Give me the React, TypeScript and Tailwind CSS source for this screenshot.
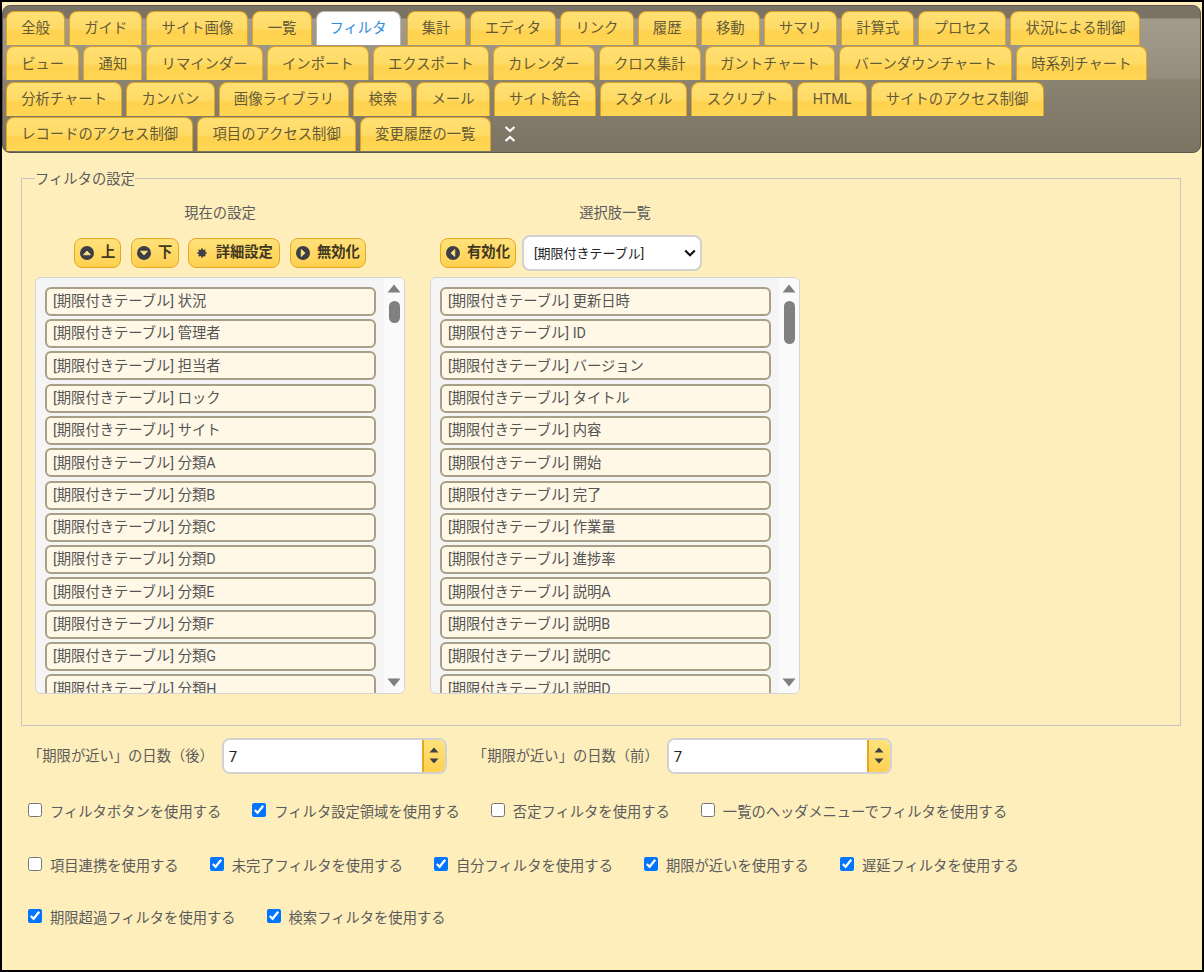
const tabs = [
  "全般", "ガイド", "サイト画像", "一覧", "フィルタ", "集計", "エディタ", "リンク", "履歴", "移動", "サマリ", "計算式", "プロセス", "状況による制御",
  "ビュー", "通知", "リマインダー", "インポート", "エクスポート", "カレンダー", "クロス集計", "ガントチャート", "バーンダウンチャート", "時系列チャート",
  "分析チャート", "カンバン", "画像ライブラリ", "検索", "メール", "サイト統合", "スタイル", "スクリプト", "HTML", "サイトのアクセス制御",
  "レコードのアクセス制御", "項目のアクセス制御", "変更履歴の一覧",
];

const current = ["状況", "管理者", "担当者", "ロック", "サイト", "分類A", "分類B", "分類C", "分類D", "分類E", "分類F", "分類G", "分類H"];
const options = ["更新日時", "ID", "バージョン", "タイトル", "内容", "開始", "完了", "作業量", "進捗率", "説明A", "説明B", "説明C", "説明D"];

const checkRows = [
  {
    gap: "mt-0",
    items: [
      { label: "フィルタボタンを使用する", on: false },
      { label: "フィルタ設定領域を使用する", on: true },
      { label: "否定フィルタを使用する", on: false },
      { label: "一覧のヘッダメニューでフィルタを使用する", on: false },
    ],
  },
  {
    gap: "mt-[34px]",
    items: [
      { label: "項目連携を使用する", on: false },
      { label: "未完了フィルタを使用する", on: true },
      { label: "自分フィルタを使用する", on: true },
      { label: "期限が近いを使用する", on: true },
      { label: "遅延フィルタを使用する", on: true },
    ],
  },
  {
    gap: "mt-[32px]",
    items: [
      { label: "期限超過フィルタを使用する", on: true },
      { label: "検索フィルタを使用する", on: true },
    ],
  },
];

function CircleIcon({ dir }: { dir: "up" | "down" | "left" | "right" }) {
  const shapes = {
    up: "M3.5 8.8 L7 5 L10.5 8.8 Z",
    down: "M3.5 5.2 L7 9 L10.5 5.2 Z",
    left: "M8.8 3.5 L5 7 L8.8 10.5 Z",
    right: "M5.2 3.5 L9 7 L5.2 10.5 Z",
  };
  return (
    <svg width="14" height="14" viewBox="0 0 14 14" className="mr-[7px] shrink-0">
      <circle cx="7" cy="7" r="7" fill="#3d3f45" />
      <path d={shapes[dir]} fill="#ffe585" stroke="#ffe585" strokeWidth="0.8" strokeLinejoin="round" />
    </svg>
  );
}

function GearIcon() {
  return (
    <svg width="12" height="12" viewBox="0 0 14 14" className="mr-[8px] shrink-0">
      <circle cx="7" cy="7" r="3" fill="none" stroke="#3d3f45" strokeWidth="2.4" />
      <path d="M7 1.5V12.5M1.5 7H12.5M3.1 3.1L10.9 10.9M10.9 3.1L3.1 10.9" stroke="#3d3f45" strokeWidth="1.6" />
    </svg>
  );
}

function Button({ icon, width, children }: { icon: React.ReactNode; width: string; children: React.ReactNode }) {
  return (
    <button
      className={`flex h-[30px] items-center justify-center rounded-lg border border-[#e6a823] bg-gradient-to-b from-[#ffe27a] to-[#ffd04f] text-[14.3px] font-bold text-[#3f3720] ${width}`}
    >
      {icon}
      {children}
    </button>
  );
}

function Scrollbar({ thumb }: { thumb: string }) {
  return (
    <div className="flex w-[20px] shrink-0 flex-col items-center bg-[#fafafa] pt-[6px]">
      <svg width="14" height="9" viewBox="0 0 14 9">
        <path d="M7 0.5L13.5 8.5H0.5Z" fill="#808080" />
      </svg>
      <div className={`mt-[8px] w-[11px] rounded-full bg-[#808080] ${thumb}`} />
      <svg width="14" height="9" viewBox="0 0 14 9" className="mb-[6px] mt-auto">
        <path d="M7 8.5L13.5 0.5H0.5Z" fill="#808080" />
      </svg>
    </div>
  );
}

function ItemList({ items, thumb }: { items: string[]; thumb: string }) {
  return (
    <div className="flex h-[417px] w-[370px] overflow-hidden rounded-md border border-[#d4d4d4] bg-[#f5f5f5]">
      <div className="flex min-w-0 flex-1 flex-col gap-[3.3px] overflow-hidden pl-[9px] pr-[8px] pt-[9px]">
        {items.map((item) => (
          <div
            key={item}
            className="flex h-[29px] shrink-0 items-center rounded-md border-2 border-[#a99f86] bg-[#fff8e6] pl-[6px] pt-[1px] text-[14.3px] text-[#555555]"
          >
            [期限付きテーブル] {item}
          </div>
        ))}
      </div>
      <Scrollbar thumb={thumb} />
    </div>
  );
}

function NumberField({ label }: { label: string }) {
  return (
    <div className="flex items-center">
      <span className="mr-[8px] pt-[1px] text-[14.3px] text-[#5c5c5c]">{label}</span>
      <div className="flex h-[36px] w-[225px] overflow-hidden rounded-lg border-2 border-[#d2d2d2] bg-white">
        <input readOnly value="7" className="min-w-0 flex-1 bg-white pl-[5px] pt-[2px] text-[15px] text-[#222222] outline-none" />
        <div className="flex w-[23px] flex-col items-center justify-center gap-[5px] border-l-2 border-[#e6a823] bg-gradient-to-b from-[#ffe27a] to-[#ffd04f]">
          <svg width="10" height="6" viewBox="0 0 10 6">
            <path d="M5 0.5L9.5 5.5H0.5Z" fill="#3d3f45" />
          </svg>
          <svg width="10" height="6" viewBox="0 0 10 6">
            <path d="M5 5.5L9.5 0.5H0.5Z" fill="#3d3f45" />
          </svg>
        </div>
      </div>
    </div>
  );
}

export default function App() {
  return (
    <div
      className="flex h-[972px] w-[1204px] flex-col border-x-2 border-y-2 border-x-black border-y-black bg-[#feeebb] pt-[3px]"
      style={{ fontFamily: '"Roboto", "Noto Sans CJK JP", sans-serif' }}
    >
      <header className="mr-[1px] rounded-lg border border-[#5d574b] bg-[linear-gradient(to_bottom,#7a7264_0,#7a7264_12px,#a39c8d_13px,#958e7f_72px,#8b8372_74px,#7a7263_100%)] pb-[1px] pl-[3px] pt-[5px]">
        <div className="flex flex-wrap items-start gap-x-[4px] gap-y-[1.3px]">
          {tabs.map((tab) =>
            tab === "フィルタ" ? (
              <div
                key={tab}
                className="mr-[2px] flex h-[34px] items-center rounded-t-lg border border-b-0 border-[#bdb7aa] bg-white px-[13px] pt-[1px] text-[14.33px] text-[#2f8fdc]"
              >
                {tab}
              </div>
            ) : (
              <div
                key={tab}
                className="flex h-[34px] items-center rounded-t-lg border border-b-0 border-[#e0a325] bg-[linear-gradient(to_bottom,#ffe074_0,#ffdb66_50%,#ffd24e_60%,#ffd655_100%)] px-[14.2px] pt-[1px] text-[14.33px] text-[#655a36]"
              >
                {tab}
              </div>
            ),
          )}
          <svg width="14" height="18" viewBox="0 0 14 18" className="ml-[8px] mt-[8px]">
            <path d="M2.5 2L7 6L11.5 2M2.5 16L7 12L11.5 16" fill="none" stroke="white" strokeWidth="2.2" />
          </svg>
        </div>
      </header>

      <main className="flex-1 pl-[19px]">
        <fieldset className="mt-[15px] h-[558px] w-[1160px] border border-[#c9c7bd] pl-[13px]">
          <legend className="translate-y-[1px] text-[14.3px] text-[#5c5c5c]">フィルタの設定</legend>
          <div className="flex gap-[25px]">
            <div className="w-[370px]">
              <div className="mt-[14px] text-center text-[14.3px] text-[#5c5c5c]">現在の設定</div>
              <div className="mt-[13px] flex h-[30px] justify-center gap-[9.6px]">
                <Button width="w-[47px]" icon={<CircleIcon dir="up" />}>上</Button>
                <Button width="w-[48px]" icon={<CircleIcon dir="down" />}>下</Button>
                <Button width="w-[92px]" icon={<GearIcon />}>詳細設定</Button>
                <Button width="w-[76px]" icon={<CircleIcon dir="right" />}>無効化</Button>
              </div>
              <div className="mt-[9px]">
                <ItemList items={current} thumb="h-[22px]" />
              </div>
            </div>
            <div className="w-[370px]">
              <div className="mt-[14px] text-center text-[14.3px] text-[#5c5c5c]">選択肢一覧</div>
              <div className="mt-[13px] flex h-[30px] items-center gap-[6px] pl-[10px]">
                <Button width="w-[76px]" icon={<CircleIcon dir="left" />}>有効化</Button>
                <div className="relative">
                  <select className="h-[36px] w-[180px] appearance-none rounded-lg border-2 border-[#d2d2d2] bg-white pl-[10px] pt-[1px] text-[13px] text-[#222222]">
                    <option>[期限付きテーブル]</option>
                  </select>
                  <svg width="12" height="8" viewBox="0 0 12 8" className="pointer-events-none absolute right-[6px] top-[14px]">
                    <path d="M1.2 1.5L6 6.2L10.8 1.5" fill="none" stroke="#111111" strokeWidth="2.2" />
                  </svg>
                </div>
              </div>
              <div className="mt-[9px]">
                <ItemList items={options} thumb="h-[43px]" />
              </div>
            </div>
          </div>
        </fieldset>

        <div className="mt-[12px] flex gap-[26px] pl-[7px]">
          <NumberField label="「期限が近い」の日数（後）" />
          <NumberField label="「期限が近い」の日数（前）" />
        </div>

        <div className="mt-[26px] flex flex-col pl-[7px]">
          {checkRows.map((row, i) => (
            <div key={i} className={`flex h-[20px] items-center gap-[31px] ${row.gap}`}>
              {row.items.map((c) => (
                <label key={c.label} className="flex items-center gap-[8px] text-[14.3px] text-[#5c5c5c]">
                  <input type="checkbox" defaultChecked={c.on} className="m-0 h-[14px] w-[14px]" />
                  <span className="translate-y-[2.5px]">{c.label}</span>
                </label>
              ))}
            </div>
          ))}
        </div>
      </main>
    </div>
  );
}
